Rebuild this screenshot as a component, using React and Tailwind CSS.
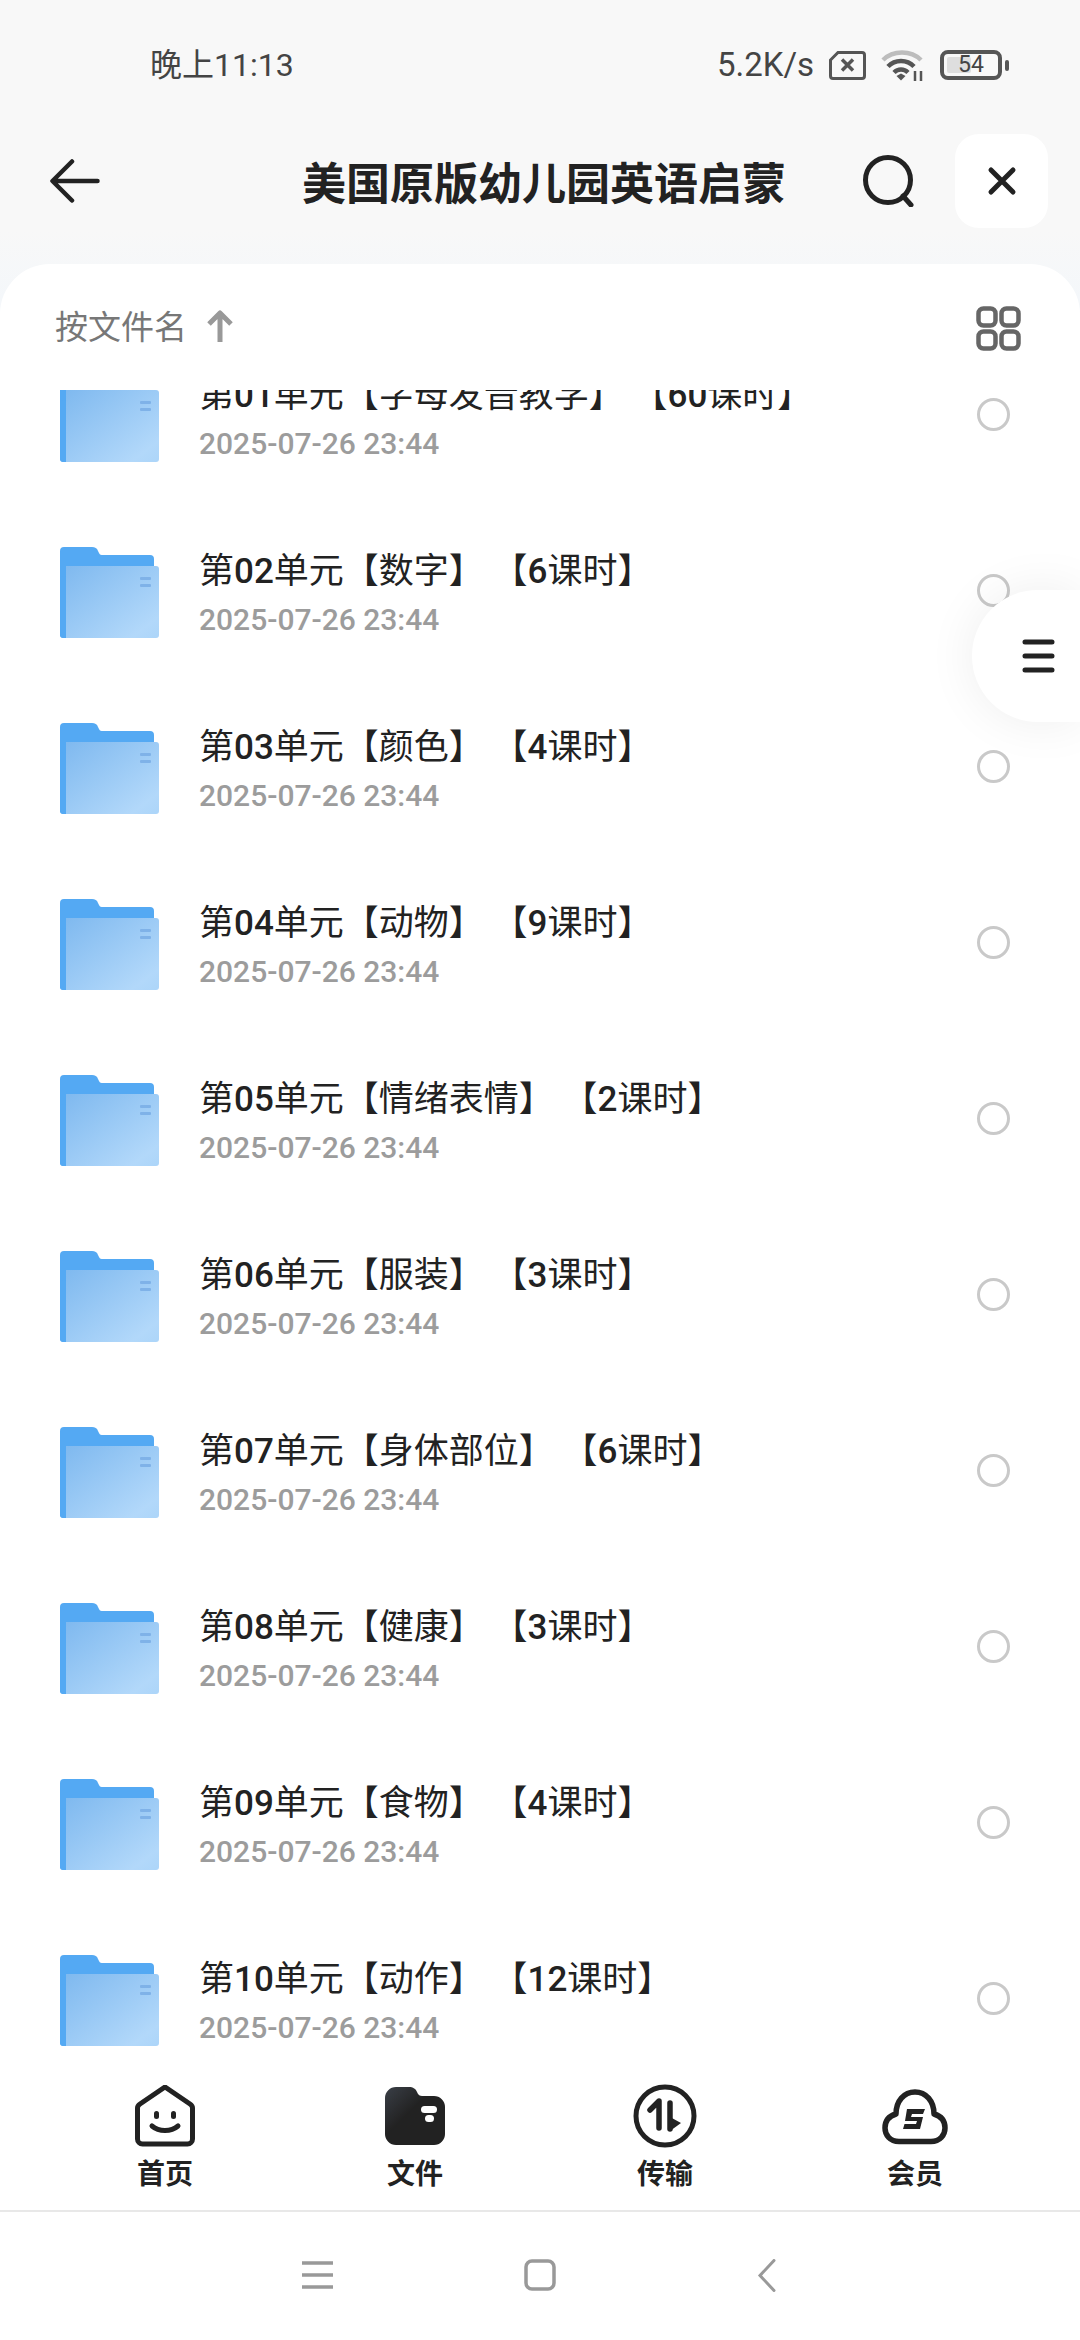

function Folder() {
  return (
    <svg width="100" height="92" viewBox="0 0 100 92" className="shrink-0">
      <defs>
        <linearGradient id="ff" x1="0" y1="0" x2="1" y2="1">
          <stop offset="0" stopColor="#7fb9ef" />
          <stop offset="0.85" stopColor="#b2d8fa" />
          <stop offset="1" stopColor="#acd5f9" />
        </linearGradient>
      </defs>
      <path d="M0 5a4 4 0 0 1 4-4h28c3 0 5 1 6 4l1 2c1 2 2 2 4 2h47a4 4 0 0 1 4 4v30H6v49H4a4 4 0 0 1-4-4z" fill="#54a9f3" />
      <rect x="0" y="30" width="8" height="62" rx="3" fill="#54a9f3" />
      <path d="M6 20h90a3 3 0 0 1 3 3v66a3 3 0 0 1-3 3H6z" fill="url(#ff)" />
      <rect x="80" y="31" width="11" height="3" rx="1" fill="#7fb2e8" />
      <rect x="80" y="38" width="11" height="3" rx="1" fill="#7fb2e8" />
    </svg>
  );
}

function Radio() {
  return <div className="w-[33px] h-[33px] rounded-full border-[3px] border-[#c9c9c9] shrink-0 mt-[-3px]" />;
}

const rows = [
  "第01单元【字母发音教学】 【60课时】",
  "第02单元【数字】 【6课时】",
  "第03单元【颜色】 【4课时】",
  "第04单元【动物】 【9课时】",
  "第05单元【情绪表情】 【2课时】",
  "第06单元【服装】 【3课时】",
  "第07单元【身体部位】 【6课时】",
  "第08单元【健康】 【3课时】",
  "第09单元【食物】 【4课时】",
  "第10单元【动作】 【12课时】",
];

function Row({ title }) {
  return (
    <div className="h-[176px] shrink-0 flex items-center pl-[60px] pr-[70px]">
      <Folder />
      <div className="ml-[39px] flex-1 min-w-0 pt-[6px]">
        <div className="text-[35px] leading-[44px] text-[#222222] whitespace-nowrap mt-[-2px] [text-spacing-trim:space-all]">
          {title.split(/(\d+)/).map((part, i) =>
            i % 2 ? (
              <span key={i} className="font-medium">{part}</span>
            ) : (
              part
            )
          )}
        </div>
        <div className="text-[30px] leading-[36px] mt-[8px] font-medium text-[#9c9c9c] whitespace-nowrap">2025-07-26 23:44</div>
      </div>
      <Radio />
    </div>
  );
}

function Tab({ label, children }) {
  return (
    <div className="flex flex-col items-center">
      <div className="h-[62px] flex items-center justify-center">{children}</div>
      <div className="text-[28px] leading-[36px] font-bold text-[#222222] mt-[10px]">{label}</div>
    </div>
  );
}

export default function App() {
  return (
    <div className="relative w-[1080px] h-[2340px] overflow-hidden flex flex-col bg-[linear-gradient(#f8f8f8_230px,#f4f7fa_300px)] font-['Roboto','Noto_Sans_CJK_SC',sans-serif]">
      {/* status bar */}
      <div className="h-[130px] shrink-0 flex items-center pl-[150px] text-[#444444]">
        <div className="text-[32px] leading-[40px] w-[142px] whitespace-nowrap">晚上11:13</div>
        <div className="ml-[425px] text-[33px] leading-[40px] w-[95px] whitespace-nowrap">5.2K/s</div>
        <svg width="37" height="29" viewBox="0 0 37 29" className="ml-[17px]" fill="none">
          <path d="M9 1.500h24a2.500 2.500 0 0 1 2.500 2.500v21a2.500 2.500 0 0 1-2.500 2.500H4A2.500 2.500 0 0 1 1.500 25V9z" stroke="#555" strokeWidth="3" />
          <path d="M13 8.500l11 11M24 8.500l-11 11" stroke="#555" strokeWidth="3.500" />
        </svg>
        <svg width="44" height="33" viewBox="0 0 44 33" className="ml-[15px]" fill="none">
          <path d="M2 11C12 1 30 1 40 11" stroke="#bdbdbd" strokeWidth="4.500" />
          <path d="M7 17.500C14 10 26 10 33 17.500" stroke="#555" strokeWidth="4.500" />
          <path d="M13 23.500C17 19.500 23 19.500 27 23.500" stroke="#555" strokeWidth="4.500" />
          <path d="M15.500 27l4.500-2.500 4.500 2.500-4.500 4.500z" fill="#555" />
          <path d="M34 22v10M40 22v10" stroke="#555" strokeWidth="2.500" />
        </svg>
        <div className="ml-[15px] relative w-[62px] h-[30px] rounded-[8px] border-[4px] border-[#555555] flex items-center justify-center">
          <div className="absolute left-[3px] top-[3px] bottom-[3px] w-[24px] rounded-[2px] bg-[#dedede]" />
          <span className="relative text-[23px] leading-[22px] text-[#444444]">54</span>
        </div>
        <div className="ml-[3px] w-[4px] h-[11px] rounded-[2px] bg-[#555555]" />
      </div>

      {/* header */}
      <div className="h-[134px] shrink-0 flex items-start pt-[4px] pl-[50px]">
        <div className="h-[94px] flex items-center">
          <svg width="50" height="44" viewBox="0 0 50 44" fill="none">
            <path d="M22 2.500L2.500 22 22 41.500M3 22h44.500" stroke="#222" strokeWidth="4.500" strokeLinecap="round" strokeLinejoin="round" />
          </svg>
        </div>
        <div className="ml-[203px] w-[482px] h-[102px] flex items-center justify-center text-[44px] leading-[60px] font-bold text-[#222222] whitespace-nowrap">美国原版幼儿园英语启蒙</div>
        <div className="ml-[77px] h-[94px] flex items-center">
          <svg width="54" height="52" viewBox="0 0 54 52" fill="none">
            <circle cx="26" cy="25" r="22.500" stroke="#222" strokeWidth="5" />
            <path d="M41 41l8 9" stroke="#222" strokeWidth="5" strokeLinecap="round" />
          </svg>
        </div>
        <div className="ml-[39px] w-[93px] h-[94px] rounded-[24px] bg-white flex items-center justify-center">
          <svg width="30" height="30" viewBox="0 0 30 30" fill="none">
            <path d="M4 4l22 22M26 4L4 26" stroke="#222" strokeWidth="5" strokeLinecap="round" />
          </svg>
        </div>
      </div>

      {/* card */}
      <div className="flex-1 min-h-0 bg-white rounded-t-[50px] flex flex-col">
        <div className="h-[126px] shrink-0 flex items-center pl-[55px] pr-[60px] pt-[2px]">
          <span className="text-[33px] leading-[42px] text-[#777777]">按文件名</span>
          <svg width="28" height="34" viewBox="0 0 28 34" className="ml-[19px] mt-[-2px]" fill="none">
            <path d="M14 32V3M3 14L14 3l11 11" stroke="#999" strokeWidth="5" strokeLinejoin="round" />
          </svg>
          <svg width="45" height="45" viewBox="0 0 45 45" className="ml-auto mr-[-1px]" fill="none" stroke="#666" strokeWidth="4.500">
            <rect x="2.500" y="2.500" width="17" height="17" rx="5" />
            <rect x="25.500" y="2.500" width="17" height="17" rx="5" />
            <rect x="2.500" y="25.500" width="17" height="17" rx="5" />
            <rect x="25.500" y="25.500" width="17" height="17" rx="5" />
          </svg>
        </div>

        <div className="h-[1660px] shrink-0 overflow-hidden">
          <div className="mt-[-62px] flex flex-col">
            {rows.map((r) => (
              <Row key={r} title={r} />
            ))}
          </div>
        </div>

        {/* tab bar */}
        <div className="h-[162px] shrink-0 border-b-[2px] border-[#e8e8e8] grid grid-cols-4 px-[40px] pt-[35px]">
          <Tab label="首页">
            <svg width="60" height="62" viewBox="0 -2 60 62" fill="none">
              <path d="M30 0L55 17c1.500 1 2.500 2 2.500 4v31a5 5 0 0 1-5 5h-45a5 5 0 0 1-5-5V21c0-2 1-3 2.500-4z" stroke="#222" strokeWidth="5" strokeLinejoin="round" />
              <rect x="19" y="24" width="5" height="8" rx="2.500" fill="#222" />
              <rect x="36" y="24" width="5" height="8" rx="2.500" fill="#222" />
              <path d="M17 39c7 6 19 6 26 0" stroke="#222" strokeWidth="5" strokeLinecap="round" />
            </svg>
          </Tab>
          <Tab label="文件">
            <svg width="60" height="58" viewBox="0 0 60 58" fill="none">
              <defs>
                <linearGradient id="fd" x1="0" y1="0" x2="0.7" y2="0.7">
                  <stop offset="0" stopColor="#3a3f47" />
                  <stop offset="0.6" stopColor="#222222" />
                </linearGradient>
              </defs>
              <path d="M0 11A11 11 0 0 1 11 0h13c4 0 7 2 8 5l1 2c1 1 2 2 4 2h12a11 11 0 0 1 11 11v27a11 11 0 0 1-11 11H11A11 11 0 0 1 0 47z" fill="url(#fd)" />
              <rect x="36" y="19" width="16" height="7" rx="3.500" fill="#fff" />
              <rect x="40" y="28" width="9" height="7" rx="3.500" fill="#fff" />
            </svg>
          </Tab>
          <Tab label="传输">
            <svg width="64" height="64" viewBox="0 0 64 64" fill="none">
              <circle cx="32" cy="32" r="29" stroke="#222" strokeWidth="5" />
              <path d="M26 44V17L17 26" stroke="#222" strokeWidth="5.500" strokeLinecap="round" strokeLinejoin="round" />
              <path d="M37 19v26" stroke="#222" strokeWidth="5.500" strokeLinecap="round" />
              <path d="M37 33l11 6-11 8z" fill="#222" />
            </svg>
          </Tab>
          <Tab label="会员">
            <svg width="66" height="56" viewBox="0 0 66 56" fill="none" className="mt-[2px]">
              <path d="M17 52.500C8 52.500 3 46 3 39c0-7 4-12 11-14C14 12 22 3 33 3c11 0 19 9 19 22 7 2 11 7 11 14 0 7-5 13.500-14 13.500z" stroke="#222" strokeWidth="5.500" strokeLinejoin="round" />
              <path d="M25 20h18l-2 5H30l-1 3h12l-3 12H21l1.500-5H34l1-3H23z" fill="#222" />
            </svg>
          </Tab>
        </div>

        {/* nav bar */}
        <div className="flex-1 min-h-0 flex items-center pb-[2px] pl-[302px]">
          <svg width="31" height="28" viewBox="0 0 31 28" fill="none" stroke="#999" strokeWidth="3.500">
            <path d="M0 2h31M0 14h31M0 26h31" />
          </svg>
          <svg width="32" height="32" viewBox="0 0 32 32" className="ml-[191px]" fill="none" stroke="#999" strokeWidth="3.500">
            <rect x="2" y="2" width="28" height="28" rx="6" />
          </svg>
          <svg width="20" height="33" viewBox="0 0 20 33" className="ml-[201px]" fill="none" stroke="#999" strokeWidth="3">
            <path d="M17 1.500L3 16.500l14 15" strokeLinecap="round" />
          </svg>
        </div>
      </div>

      {/* floating menu */}
      <div className="absolute right-0 top-[590px] w-[108px] h-[132px] rounded-l-[66px] bg-white shadow-[0_0_50px_rgba(0,0,0,0.07)] flex items-center pl-[50px]">
        <svg width="33" height="34" viewBox="0 0 33 34" fill="none" stroke="#222" strokeWidth="5" strokeLinecap="round">
          <path d="M3 3h27M3 17h27M3 31h27" />
        </svg>
      </div>
    </div>
  );
}
